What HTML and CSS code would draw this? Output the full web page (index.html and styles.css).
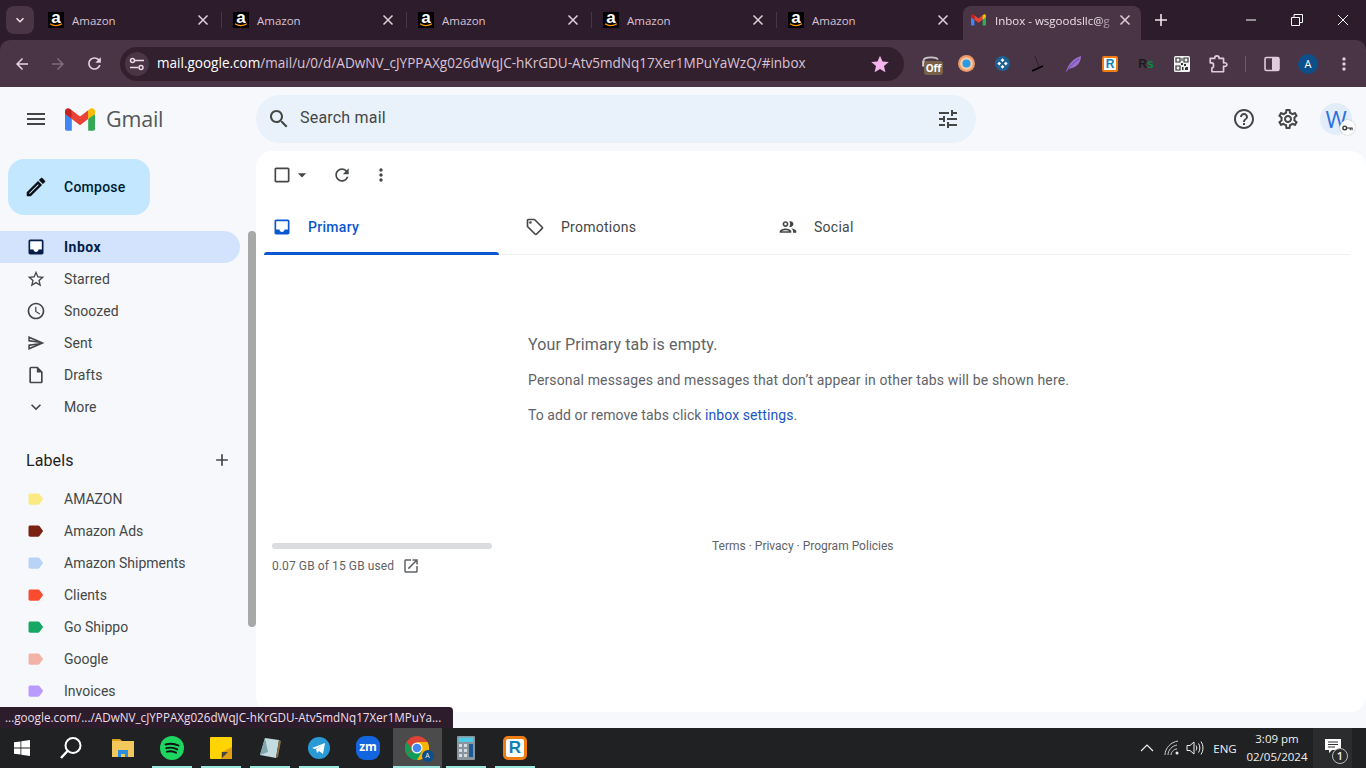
FILE: index.html
```html
<!DOCTYPE html>
<html lang="en">
<head>
    <meta charset="UTF-8">
    <meta name="viewport" content="width=device-width, initial-scale=1.0">
    <title>Inbox - Gmail</title>
    <link rel="stylesheet" href="styles.css">
</head>
<body>

    <svg class="defs" width="0" height="0">
        <symbol id="close" viewBox="0 0 16 16">
            <path d="M3.5 3.5l9 9m0-9l-9 9" fill="none" stroke="currentColor" stroke-width="1.5"/>
        </symbol>
        <symbol id="smile" viewBox="0 0 16 4">
            <path d="M2 .8c3.5 2.200 8 2.200 12 0" fill="none" stroke="#f90" stroke-width="1.300"/>
        </symbol>
        <symbol id="gmail" viewBox="0 0 256 193">
            <path fill="#4285F4" d="M58.182 192.05V93.14L27.507 65.077 0 49.504v125.091c0 9.658 7.825 17.455 17.455 17.455h40.727Z"/>
            <path fill="#34A853" d="M197.818 192.05h40.727c9.659 0 17.455-7.826 17.455-17.455V49.505l-31.156 17.837-27.026 25.798v98.91Z"/>
            <path fill="#EA4335" d="m58.182 93.14-4.174-38.647 4.174-36.989L128 69.868l69.818-52.364 4.669 34.992-4.669 40.644L128 145.504z"/>
            <path fill="#FBBC04" d="M197.818 17.504V93.14L256 49.504V26.231c0-21.585-24.64-33.89-41.89-20.945l-16.292 12.218Z"/>
            <path fill="#C5221F" d="m0 49.504 26.759 20.07L58.182 93.14V17.504L41.89 5.286C24.61-7.66 0 4.646 0 26.23v23.273Z"/>
        </symbol>
        <symbol id="inbox" viewBox="0 0 24 24">
            <path fill="#fff" d="M5 5h14v10h-4c0 1.660-1.350 3-3 3s-3-1.340-3-3H5z"/>
            <path d="M19 3H4.99C3.88 3 3 3.9 3 5l.01 14c0 1.1.88 2 1.99 2h14c1.1 0 2-.9 2-2V5c0-1.1-.9-2-2-2zm0 12h-4c0 1.66-1.35 3-3 3s-3-1.34-3-3H5V5h14v10z"/>
        </symbol>
        <symbol id="label" viewBox="0 0 20 16">
            <path d="M14.6 1.4c-.4-.5-1-.9-1.7-.9L2.2.5C1 .5 0 1.4 0 2.6v10.8c0 1.2 1 2.1 2.2 2.1l10.7 0c.7 0 1.3-.4 1.7-.9L19.5 8z"/>
        </symbol>
    </svg>

    <header class="tabstrip">
        <button class="tab-search">
            <svg viewBox="0 0 16 16" width="14" height="14"><path d="M4 6l4 4 4-4" fill="none" stroke="#f0e4ee" stroke-width="1.7"/></svg>
        </button>
        <div class="tab">
            <span class="favicon amazon-icon">a<svg class="amazon-smile"><use href="#smile"/></svg></span>
            <span class="tab-title">Amazon</span>
            <svg class="tab-close"><use href="#close"/></svg>
        </div>
        <div class="tab">
            <span class="favicon amazon-icon">a<svg class="amazon-smile"><use href="#smile"/></svg></span>
            <span class="tab-title">Amazon</span>
            <svg class="tab-close"><use href="#close"/></svg>
        </div>
        <div class="tab">
            <span class="favicon amazon-icon">a<svg class="amazon-smile"><use href="#smile"/></svg></span>
            <span class="tab-title">Amazon</span>
            <svg class="tab-close"><use href="#close"/></svg>
        </div>
        <div class="tab">
            <span class="favicon amazon-icon">a<svg class="amazon-smile"><use href="#smile"/></svg></span>
            <span class="tab-title">Amazon</span>
            <svg class="tab-close"><use href="#close"/></svg>
        </div>
        <div class="tab tab-last">
            <span class="favicon amazon-icon">a<svg class="amazon-smile"><use href="#smile"/></svg></span>
            <span class="tab-title">Amazon</span>
            <svg class="tab-close"><use href="#close"/></svg>
        </div>
        <div class="tab tab-active">
            <svg class="favicon favicon-gmail"><use href="#gmail"/></svg>
            <span class="tab-title">Inbox - wsgoodsllc@g</span>
            <svg class="tab-close"><use href="#close"/></svg>
        </div>
        <div class="new-tab">
            <svg viewBox="0 0 16 16" width="16" height="16"><path d="M8 2v12M2 8h12" stroke="#f0e4ee" stroke-width="1.6"/></svg>
        </div>
        <div class="window-controls">
            <div class="win-btn"><svg viewBox="0 0 12 12" width="12" height="12"><path d="M1 6h10" stroke="#fff"/></svg></div>
            <div class="win-btn"><svg viewBox="0 0 12 12" width="12" height="12"><path d="M.5 3.5h8v8h-8zM3 3.5V.5h8.500v8H8.500" fill="none" stroke="#fff"/></svg></div>
            <div class="win-btn"><svg viewBox="0 0 12 12" width="12" height="12"><path d="M1 1l10 10M11 1L1 11" stroke="#fff"/></svg></div>
        </div>
    </header>

    <nav class="toolbar">
        <div class="nav-btn">
            <svg viewBox="0 0 24 24" width="18" height="18" fill="#e6d6e3"><path d="M20 11H7.830l5.590-5.590L12 4l-8 8 8 8 1.410-1.410L7.830 13H20v-2z"/></svg>
        </div>
        <div class="nav-btn">
            <svg viewBox="0 0 24 24" width="18" height="18" fill="#7f6c7c"><path d="M4 11h12.170l-5.590-5.590L12 4l8 8-8 8-1.410-1.410L16.170 13H4v-2z"/></svg>
        </div>
        <div class="nav-btn">
            <svg viewBox="0 0 24 24" width="19" height="19" fill="#e6d6e3"><path d="M17.650 6.350C16.200 4.900 14.210 4 12 4c-4.420 0-7.990 3.580-7.990 8s3.570 8 7.990 8c3.730 0 6.840-2.550 7.730-6h-2.080c-.82 2.330-3.040 4-5.650 4-3.310 0-6-2.690-6-6s2.690-6 6-6c1.660 0 3.140.69 4.220 1.780L13 11h7V4l-2.350 2.350z"/></svg>
        </div>
        <div class="omnibox">
            <div class="site-info">
                <svg viewBox="0 0 16 16" width="16" height="16" fill="none" stroke="#eadbe7" stroke-width="1.500"><path d="M6 4.500h9M1 11.500h8"/><circle cx="3.500" cy="4.500" r="2"/><circle cx="12" cy="11.500" r="2"/></svg>
            </div>
            <span class="url"><span class="url-host">mail.google.com</span>/mail/u/0/d/ADwNV_cJYPPAXg026dWqJC-hKrGDU-Atv5mdNq17Xer1MPuYaWzQ/#inbox</span>
            <svg class="url-star" viewBox="0 0 24 24" width="20" height="20" fill="#f6b4ec"><path d="M12 2l3 7 7.500.6-5.700 4.900 1.700 7.400L12 18l-6.500 3.900 1.700-7.400L1.500 9.600 9 9z"/></svg>
        </div>
        <div class="extensions">
            <div class="ext ext-off">
                <svg viewBox="0 0 24 24" width="20" height="20"><path d="M3 8c0-3 4-4 9-4s8 1 8 3" fill="none" stroke="#c9c4c9" stroke-width="2"/><path d="M3 8v7" stroke="#d9d4d9" stroke-width="3"/></svg>
                <span class="off-badge">Off</span>
            </div>
            <div class="ext">
                <svg viewBox="0 0 16 16" width="17" height="17"><circle cx="8" cy="8" r="8" fill="#ec9a66"/><circle cx="8" cy="8" r="6" fill="#f5c9a8"/><circle cx="8" cy="8" r="3.800" fill="#2a9be0"/></svg>
            </div>
            <div class="ext">
                <svg viewBox="0 0 16 16" width="15" height="15"><circle cx="8" cy="8" r="8" fill="#1f6092"/><path d="M8 2.500l2 2-2 2-2-2zM8 9.500l2 2-2 2-2-2zM4.500 6l2 2-2 2-2-2zM11.500 6l2 2-2 2-2-2z" fill="#fff"/></svg>
            </div>
            <div class="ext">
                <svg viewBox="0 0 18 18" width="18" height="18"><path d="M6 1l4 11" stroke="#2a2028"/><path d="M3 16l11-5" stroke="#000" stroke-width="1.600"/></svg>
            </div>
            <div class="ext">
                <svg viewBox="0 0 18 18" width="18" height="18"><path d="M1 17C3 9 9 3 16 1c0 6-4 11-9 12l-3 1z" fill="#9a6fd0"/><path d="M1 17C5 11 9 7 14 4" stroke="#6b4a96" fill="none"/></svg>
            </div>
            <div class="ext">
                <span class="r-logo">R</span>
            </div>
            <div class="ext">
                <span class="rs-logo">R<span class="rs-s">s</span></span>
            </div>
            <div class="ext">
                <svg viewBox="0 0 16 16" width="16" height="16"><rect width="16" height="16" rx="1.500" fill="#f2f2f2"/><path d="M2 2h4v4H2zM10 2h4v4h-4zM2 10h4v4H2z" fill="none" stroke="#333" stroke-width="1.200"/><path d="M7.500 2h1v3h-1zM7 7h2v2H7zM10 8h2v2h-2zM12 11h2v3h-3v-2zM8 11h1.500v3H8z" fill="#333"/></svg>
            </div>
            <div class="ext">
                <svg viewBox="0 0 18 18" width="20" height="20" fill="none" stroke="#e0cbdc" stroke-width="1.500"><path d="M2 4h4c0-3 4-3 4 0h4v4c2-.5 3 .5 3 1.500S16 11.500 14 11v5H3.500v-3.500c2 0 2-4.500 0-4.500H2z" stroke-linejoin="round"/></svg>
            </div>
        </div>
        <div class="toolbar-sep"></div>
        <div class="ext">
            <svg viewBox="0 0 16 16" width="16" height="16"><rect x="1" y="1.500" width="14" height="13" rx="1.500" fill="none" stroke="#e0cbdc" stroke-width="1.600"/><rect x="8" y="1.500" width="7" height="13" fill="#e0cbdc"/></svg>
        </div>
        <div class="ext"><span class="profile">A</span></div>
        <div class="ext">
            <svg viewBox="0 0 24 24" width="20" height="20" fill="#e0cbdc"><path d="M12 8c1.100 0 2-.9 2-2s-.9-2-2-2-2 .9-2 2 .9 2 2 2zm0 2c-1.100 0-2 .9-2 2s.9 2 2 2 2-.9 2-2-.9-2-2-2zm0 6c-1.100 0-2 .9-2 2s.9 2 2 2 2-.9 2-2-.9-2-2-2z"/></svg>
        </div>
    </nav>

    <div class="app">
        <div class="app-header">
            <div class="brand">
                <svg class="icon hamburger" viewBox="0 0 24 24" width="24" height="24"><path d="M3 18h18v-2H3v2zm0-5h18v-2H3v2zm0-7v2h18V6H3z"/></svg>
                <svg class="gmail-logo"><use href="#gmail"/></svg>
                <span class="gmail-word">Gmail</span>
            </div>
            <div class="searchbar">
                <svg class="icon" viewBox="0 0 24 24" width="24" height="24"><path d="M15.500 14h-.79l-.28-.27C15.410 12.590 16 11.110 16 9.500 16 5.910 13.090 3 9.500 3S3 5.910 3 9.500 5.910 16 9.500 16c1.610 0 3.090-.59 4.230-1.570l.27.28v.79l5 4.990L20.490 19l-4.990-5zm-6 0C7.010 14 5 11.990 5 9.500S7.010 5 9.500 5 14 7.010 14 9.500 11.990 14 9.500 14z"/></svg>
                <span class="search-text">Search mail</span>
                <svg class="icon search-tune" viewBox="0 0 24 24" width="24" height="24"><path d="M3 17v2h6v-2H3zM3 5v2h10V5H3zm10 16v-2h8v-2h-8v-2h-2v6h2zM7 9v2H3v2h4v2h2V9H7zm14 4v-2H11v2h10zm-6-4h2V7h4V5h-4V3h-2v6z"/></svg>
            </div>
            <div class="header-actions">
                <svg class="icon" viewBox="0 0 24 24" width="24" height="24"><path d="M11 18h2v-2h-2v2zm1-16C6.480 2 2 6.480 2 12s4.480 10 10 10 10-4.480 10-10S17.520 2 12 2zm0 18c-4.410 0-8-3.590-8-8s3.590-8 8-8 8 3.590 8 8-3.590 8-8 8zm0-14c-2.210 0-4 1.790-4 4h2c0-1.100.9-2 2-2s2 .9 2 2c0 2-3 1.750-3 5h2c0-2.250 3-2.500 3-5 0-2.210-1.790-4-4-4z"/></svg>
                <svg class="icon" viewBox="0 0 24 24" width="24" height="24"><path d="M19.430 12.980c.04-.32.07-.64.07-.98 0-.34-.03-.66-.07-.98l2.110-1.650c.19-.15.24-.42.12-.64l-2-3.460c-.09-.16-.26-.25-.44-.25-.06 0-.12.01-.17.03l-2.490 1c-.52-.4-1.080-.73-1.690-.98l-.38-2.650C14.460 2.180 14.250 2 14 2h-4c-.25 0-.46.18-.49.42l-.38 2.650c-.61.25-1.170.59-1.690.98l-2.490-1c-.06-.02-.12-.03-.18-.03-.17 0-.34.09-.43.25l-2 3.460c-.13.22-.07.49.12.64l2.110 1.650c-.04.32-.07.65-.07.98 0 .33.03.66.07.98l-2.110 1.650c-.19.15-.24.42-.12.64l2 3.460c.09.16.26.25.44.25.06 0 .12-.01.17-.03l2.490-1c.52.4 1.080.73 1.690.98l.38 2.650c.03.24.24.42.49.42h4c.25 0 .46-.18.49-.42l.38-2.650c.61-.25 1.170-.59 1.690-.98l2.490 1c.06.02.12.03.18.03.17 0 .34-.09.43-.25l2-3.460c.12-.22.07-.49-.12-.64l-2.110-1.650zm-1.980-1.710c.04.31.05.52.05.73 0 .21-.02.43-.05.73l-.14 1.130.89.7 1.080.84-.7 1.210-1.270-.51-1.040-.42-.9.68c-.43.32-.84.56-1.250.73l-1.060.43-.16 1.130-.2 1.350h-1.400l-.19-1.350-.16-1.130-1.060-.43c-.43-.18-.83-.41-1.230-.71l-.91-.7-1.060.43-1.270.51-.7-1.210 1.080-.84.89-.7-.14-1.130c-.03-.31-.05-.54-.05-.74s.02-.43.05-.73l.14-1.130-.89-.7-1.080-.84.7-1.210 1.270.51 1.040.42.9-.68c.43-.32.84-.56 1.250-.73l1.060-.43.16-1.130.2-1.350h1.390l.19 1.350.16 1.130 1.060.43c.43.18.83.41 1.230.71l.91.7 1.060-.43 1.270-.51.7 1.210-1.070.85-.89.7.14 1.130zM12 8c-2.210 0-4 1.790-4 4s1.790 4 4 4 4-1.790 4-4-1.790-4-4-4zm0 6c-1.100 0-2-.9-2-2s.9-2 2-2 2 .9 2 2-.9 2-2 2z"/></svg>
                <div class="account">
                    W
                    <span class="key-badge">
                        <svg viewBox="0 0 12 8" width="11" height="8"><circle cx="3" cy="4" r="2" fill="none" stroke="#333" stroke-width="1.500"/><path d="M5 4h6.500M9 4v2.500M11 4v2.500" stroke="#333" stroke-width="1.200"/></svg>
                    </span>
                </div>
            </div>
        </div>

        <div class="app-body">
            <aside class="sidebar">
                <button class="compose">
                    <svg viewBox="0 0 24 24" width="24" height="24" fill="#0a0f14" stroke="#0a0f14" stroke-width=".5"><path d="M14.060 9.020l.92.92L5.920 19H5v-.92l9.060-9.060M17.660 3c-.25 0-.51.1-.7.29l-1.830 1.830 3.750 3.750 1.830-1.830c.39-.39.39-1.020 0-1.410l-2.340-2.340c-.2-.2-.45-.29-.71-.29zm-3.600 3.190L3 17.250V21h3.750L17.810 9.940l-3.750-3.750z"/></svg>
                    <span>Compose</span>
                </button>
                <ul class="nav-list">
                    <li class="nav-item nav-active">
                        <svg class="nav-icon"><use href="#inbox"/></svg>Inbox
                    </li>
                    <li class="nav-item">
                        <svg class="nav-icon" viewBox="0 0 24 24"><path d="M22 9.240l-7.190-.62L12 2 9.190 8.630 2 9.240l5.460 4.730L5.820 21 12 17.270 18.180 21l-1.630-7.030L22 9.240zM12 15.400l-3.760 2.270 1-4.280-3.320-2.880 4.380-.38L12 6.100l1.710 4.040 4.380.38-3.320 2.880 1 4.280L12 15.400z"/></svg>Starred
                    </li>
                    <li class="nav-item">
                        <svg class="nav-icon" viewBox="0 0 24 24"><path d="M11.990 2C6.470 2 2 6.480 2 12s4.470 10 9.990 10C17.520 22 22 17.520 22 12S17.520 2 11.990 2zM12 20c-4.420 0-8-3.580-8-8s3.580-8 8-8 8 3.580 8 8-3.580 8-8 8zm.5-13H11v6l5.250 3.150.75-1.230-4.500-2.670z"/></svg>Snoozed
                    </li>
                    <li class="nav-item">
                        <svg class="nav-icon" viewBox="-1 -1 26 26"><path d="M4.010 6.030l7.510 3.220-7.520-1 .01-2.220m7.500 8.720L4 17.970v-2.220l7.510-1M2.010 3L2 10l15 2-15 2 .01 7L23 12 2.010 3z"/></svg>Sent
                    </li>
                    <li class="nav-item">
                        <svg class="nav-icon" viewBox="0 0 24 24"><path d="M14 2H6c-1.100 0-1.990.9-1.990 2L4 20c0 1.100.89 2 1.990 2H18c1.100 0 2-.9 2-2V8l-6-6zM6 20V4h7v5h5v11H6z"/></svg>Drafts
                    </li>
                    <li class="nav-item">
                        <svg class="nav-icon" viewBox="0 0 24 24"><path d="M16.590 8.590L12 13.170 7.410 8.590 6 10l6 6 6-6z"/></svg>More
                    </li>
                </ul>
                <div class="labels-head">
                    <span>Labels</span>
                    <svg class="icon" viewBox="0 0 24 24" width="20" height="20"><path d="M19 13h-6v6h-2v-6H5v-2h6V5h2v6h6v2z"/></svg>
                </div>
                <ul class="label-list">
                    <li class="label-item"><svg class="label-tag tag-yellow"><use href="#label"/></svg>AMAZON</li>
                    <li class="label-item"><svg class="label-tag tag-brown"><use href="#label"/></svg>Amazon Ads</li>
                    <li class="label-item"><svg class="label-tag tag-blue"><use href="#label"/></svg>Amazon Shipments</li>
                    <li class="label-item"><svg class="label-tag tag-red"><use href="#label"/></svg>Clients</li>
                    <li class="label-item"><svg class="label-tag tag-green"><use href="#label"/></svg>Go Shippo</li>
                    <li class="label-item"><svg class="label-tag tag-salmon"><use href="#label"/></svg>Google</li>
                    <li class="label-item"><svg class="label-tag tag-purple"><use href="#label"/></svg>Invoices</li>
                </ul>
                <div class="side-scroll"></div>
            </aside>

            <main class="card">
                <div class="mail-actions">
                    <svg class="icon" viewBox="0 0 24 24" width="20" height="20"><path d="M19 5v14H5V5h14m0-2H5c-1.100 0-2 .9-2 2v14c0 1.100.9 2 2 2h14c1.100 0 2-.9 2-2V5c0-1.100-.9-2-2-2z"/></svg>
                    <svg class="icon" viewBox="0 0 24 24" width="20" height="20"><path d="M7 10l5 5 5-5z"/></svg>
                    <svg class="icon action-refresh" viewBox="0 0 24 24" width="20" height="20"><path d="M17.650 6.350C16.200 4.900 14.210 4 12 4c-4.420 0-7.990 3.580-7.990 8s3.570 8 7.990 8c3.730 0 6.840-2.550 7.730-6h-2.080c-.82 2.330-3.040 4-5.650 4-3.310 0-6-2.690-6-6s2.690-6 6-6c1.660 0 3.140.69 4.220 1.780L13 11h7V4l-2.350 2.350z"/></svg>
                    <svg class="icon action-more" viewBox="0 0 24 24" width="20" height="20"><path d="M12 8c1.100 0 2-.9 2-2s-.9-2-2-2-2 .9-2 2 .9 2 2 2zm0 2c-1.100 0-2 .9-2 2s.9 2 2 2 2-.9 2-2-.9-2-2-2zm0 6c-1.100 0-2 .9-2 2s.9 2 2 2 2-.9 2-2-.9-2-2-2z"/></svg>
                </div>
                <div class="mail-tabs">
                    <div class="mail-tab mail-tab-active">
                        <svg class="mail-tab-icon"><use href="#inbox"/></svg>Primary
                    </div>
                    <div class="mail-tab">
                        <svg class="mail-tab-icon" viewBox="0 0 24 24"><path d="M21.410 11.580l-9-9C12.050 2.220 11.550 2 11 2H4c-1.100 0-2 .9-2 2v7c0 .55.22 1.050.59 1.420l9 9c.36.36.86.58 1.410.58s1.050-.22 1.410-.59l7-7c.37-.36.59-.86.59-1.410s-.23-1.060-.59-1.420zM13 20.010L4 11V4h7v-.01l9 9-7 7.020z"/><circle cx="6.500" cy="6.500" r="1.500"/></svg>Promotions
                    </div>
                    <div class="mail-tab">
                        <svg class="mail-tab-icon" viewBox="0 0 24 24"><path d="M9 13.750c-2.340 0-7 1.170-7 3.500V19h14v-1.750c0-2.330-4.660-3.500-7-3.500zM4.340 17c.84-.58 2.870-1.250 4.660-1.250s3.820.67 4.660 1.250H4.340zM9 12c1.930 0 3.500-1.570 3.500-3.500S10.930 5 9 5 5.500 6.570 5.500 8.500 7.070 12 9 12zm0-5c.83 0 1.500.67 1.500 1.500S9.830 10 9 10s-1.500-.67-1.500-1.500S8.170 7 9 7zm7.040 6.810c1.160.84 1.960 1.960 1.960 3.440V19h4v-1.750c0-2.020-3.500-3.170-5.960-3.440zM15 12c1.930 0 3.500-1.570 3.500-3.500S16.930 5 15 5c-.54 0-1.040.13-1.500.35.63.89 1 1.980 1 3.150s-.37 2.260-1 3.150c.46.22.96.35 1.500.35z"/></svg>Social
                    </div>
                </div>
                <div class="empty">
                    <h2>Your Primary tab is empty.</h2>
                    <p>Personal messages and messages that don’t appear in other tabs will be shown here.</p>
                    <p class="empty-last">To add or remove tabs click <a href="#">inbox settings</a>.</p>
                </div>
                <div class="mail-footer">
                    <div class="storage">
                        <div class="storage-bar"></div>
                        <div class="storage-text">
                            0.07 GB of 15 GB used
                            <svg class="icon" viewBox="0 0 24 24" width="18" height="18"><path d="M19 19H5V5h7V3H5c-1.110 0-2 .9-2 2v14c0 1.100.89 2 2 2h14c1.100 0 2-.9 2-2v-7h-2v7zM14 3v2h3.590l-9.830 9.830 1.410 1.410L19 6.410V10h2V3h-7z"/></svg>
                        </div>
                    </div>
                    <div class="policies">Terms · Privacy · Program Policies</div>
                </div>
            </main>
        </div>
    </div>

    <div class="status-bubble">...google.com/.../ADwNV_cJYPPAXg026dWqJC-hKrGDU-Atv5mdNq17Xer1MPuYa...</div>

    <footer class="taskbar">
        <div class="task task-start">
            <svg viewBox="0 0 16 16" width="16" height="16" fill="#fff"><path d="M0 2.300l6.500-.9v6.200H0zM7.300 1.300L16 0v7.600H7.300zM0 8.400h6.500v6.200L0 13.700zM7.300 8.400H16V16l-8.700-1.300z"/></svg>
        </div>
        <div class="task task-search">
            <svg viewBox="0 0 24 24" width="24" height="24" fill="none" stroke="#fff" stroke-width="2"><circle cx="14" cy="9.500" r="7.500"/><path d="M8.500 15L2 22" stroke-width="2.400"/></svg>
        </div>
        <div class="task task-explorer">
            <svg viewBox="0 0 22 20" width="22" height="20"><path d="M0 1h8l2 2h-10z" fill="#d9a21b"/><rect y="3" width="22" height="16" fill="#f2c75c"/><path d="M6 19v-7h10v7h-3v-3h-4v3z" fill="#2b8fe0"/></svg>
        </div>
        <div class="task task-on">
            <svg viewBox="0 0 24 24" width="24" height="24"><circle cx="12" cy="12" r="12" fill="#1ed760"/><path d="M5.500 8.500c4.500-1.300 9-1 13 1M6.300 12.200c3.800-1 7.600-.7 11 1.200M7 15.700c3-.8 6.200-.5 9 1" fill="none" stroke="#111" stroke-width="1.900" stroke-linecap="round"/></svg>
        </div>
        <div class="task task-on">
            <svg viewBox="0 0 22 22" width="22" height="22"><rect width="22" height="22" rx="1" fill="#ffd400"/><path d="M11 22V15.500h0L22 10v12z" fill="#e0a010"/><path d="M12 21v-6h6z" fill="#444"/></svg>
        </div>
        <div class="task task-on">
            <svg viewBox="0 0 22 22" width="22" height="22"><path d="M6 1l14 2-3 18L1 18z" fill="#c4dbe0"/><path d="M6 1L1 18l8-3z" fill="#7fa7ad"/><path d="M20 3l-3 18 2-1 3-16z" fill="#8a6d4a"/></svg>
        </div>
        <div class="task task-on">
            <svg viewBox="0 0 22 22" width="22" height="22"><circle cx="11" cy="11" r="11" fill="#2a9ad6"/><path d="M4 11l13-5-2 11-4-3-2 2-1-4 7-4-8 4z" fill="#fff"/></svg>
        </div>
        <div class="task">
            <span class="zoom-logo">zm</span>
        </div>
        <div class="task task-on task-active">
            <svg viewBox="0 0 24 24" width="24" height="24">
                <circle cx="12" cy="12" r="12" fill="#db4437"/>
                <path d="M12 12L1.600 18A12 12 0 0 0 12 24l5-6z" fill="#0f9d58"/>
                <path d="M1.600 18A12 12 0 0 1 1.600 6L7 13z" fill="#0f9d58"/>
                <path d="M12 6h10.400A12 12 0 0 1 12 24l5.200-9z" fill="#f4b400"/>
                <circle cx="12" cy="12" r="5.500" fill="#fff"/>
                <circle cx="12" cy="12" r="4.300" fill="#4285f4"/>
            </svg>
            <span class="chrome-badge">A</span>
        </div>
        <div class="task task-on">
            <svg viewBox="0 0 18 24" width="18" height="24"><rect width="18" height="24" rx="1" fill="#8a949c"/><rect x="1.500" y="1.500" width="15" height="4.500" fill="#50c8e8"/><path d="M2 8h3v3H2zM7 8h3v3H7zM2 13h3v3H2zM7 13h3v3H7zM2 18h3v3H2zM7 18h3v3H7z" fill="#d5dde2"/><rect x="12" y="8" width="4" height="13" fill="#1c5c96"/></svg>
        </div>
        <div class="task task-on">
            <span class="r-logo r-logo-big">R</span>
        </div>
        <div class="tray">
            <div class="tray-chevron">
                <svg viewBox="0 0 14 8" width="14" height="8" fill="none" stroke="#f0f0f0" stroke-width="1.200"><path d="M1 7l6-6 6 6"/></svg>
            </div>
            <div class="tray-wifi">
                <svg viewBox="0 0 16 16" width="16" height="16" fill="none" stroke="#cfcfcf"><path d="M1 15C1 8 7 2 14 1M4 15c0-5 4-9 9-10M7 15c0-3 3-6 6-6"/><circle cx="13" cy="13" r="1.500" fill="#eee" stroke="none"/></svg>
            </div>
            <div class="tray-sound">
                <svg viewBox="0 0 18 16" width="18" height="16" fill="none" stroke="#f0f0f0"><path d="M1 5.500h3L8 2v12l-4-3.500H1z"/><path d="M10 5.500c1 1.500 1 3.500 0 5M12.500 3.500c1.800 2.500 1.800 6.500 0 9M15 1.500c2.600 4 2.600 9 0 13"/></svg>
            </div>
            <div class="tray-lang">ENG</div>
            <div class="tray-clock">
                <span>3:09 pm</span>
                <span>02/05/2024</span>
            </div>
            <div class="tray-notify">
                <svg viewBox="0 0 16 15" width="16" height="15"><path d="M0 0h16v11H7l-3 3v-3H0z" fill="#fff"/><path d="M3 3h10M3 5.500h10M3 8h7" stroke="#333"/></svg>
                <span class="notify-count">1</span>
            </div>
        </div>
    </footer>

</body>
</html>
```

FILE: styles.css
```css
* {
    box-sizing: border-box;
}
html, body {
    margin: 0;
    height: 100%;
}
body {
    position: relative;
    display: flex;
    flex-direction: column;
    width: 1366px;
    height: 768px;
    overflow: hidden;
    font-family: Roboto, Arial, sans-serif;
    background-color: #2c1c2c;
}
ul {
    list-style: none;
    margin: 0;
    padding: 0;
}
.defs {
    position: absolute;
}
.icon {
    flex: none;
    fill: #444746;
}

/* browser tabs */
.tabstrip {
    display: flex;
    flex: none;
    height: 40px;
    font-family: "Open Sans", "Noto Sans", sans-serif;
    font-size: 11.5px;
}
.tab-search {
    display: flex;
    align-items: center;
    justify-content: center;
    width: 28px;
    height: 28px;
    margin: 6px 3px 0 6px;
    padding: 0;
    border: none;
    border-radius: 8px;
    background-color: #4a3546;
}
.tab {
    position: relative;
    display: flex;
    align-items: center;
    flex: none;
    width: 185px;
    padding: 0 11px;
    color: #d9c3d4;
}
.tab::after {
    content: "";
    position: absolute;
    right: 0;
    top: 12px;
    width: 1px;
    height: 16px;
    background-color: #4a3546;
}
.tab-last {
    margin-right: 1px;
}
.tab-last::after {
    display: none;
}
.favicon {
    flex: none;
    width: 16px;
    height: 16px;
    margin-right: 8px;
}
.amazon-icon {
    position: relative;
    background-color: #000;
    color: #fff;
    font-family: "Liberation Sans", sans-serif;
    font-size: 17px;
    font-weight: 700;
    line-height: 12px;
    text-align: center;
}
.amazon-smile {
    position: absolute;
    left: 0;
    bottom: 1px;
    width: 16px;
    height: 4px;
}
.tab-title {
    flex: 1;
    white-space: nowrap;
}
.tab-close {
    flex: none;
    width: 16px;
    height: 16px;
    color: #e0cfdc;
}
.tab-active {
    width: 178px;
    height: 34px;
    margin-top: 6px;
    padding: 0 8px 6px;
    border-radius: 8px 8px 0 0;
    background-color: #4a3546;
    color: #ecdfe9;
}
.tab-active::after {
    display: none;
}
.tab-active .tab-title {
    -webkit-mask-image: linear-gradient(to right, #000 85%, transparent);
    mask-image: linear-gradient(to right, #000 85%, transparent);
}
.favicon-gmail {
    width: 15px;
    margin-right: 9px;
}
.new-tab {
    display: flex;
    align-items: center;
    justify-content: center;
    width: 28px;
    margin-left: 6px;
}
.window-controls {
    display: flex;
    margin-left: auto;
}
.win-btn {
    display: flex;
    align-items: center;
    justify-content: center;
    width: 46px;
}

/* address bar row */
.toolbar {
    display: flex;
    align-items: center;
    flex: none;
    height: 47px;
    padding-left: 4px;
    border-radius: 10px 10px 0 0;
    background-color: #4a3546;
    font-family: "Open Sans", "Noto Sans", sans-serif;
}
.nav-btn {
    display: flex;
    align-items: center;
    justify-content: center;
    width: 36px;
}
.omnibox {
    display: flex;
    align-items: center;
    width: 784px;
    height: 34px;
    margin: 0 10px 0 8px;
    padding: 0 14px 0 5px;
    border-radius: 17px;
    background-color: #33202f;
    color: #d9c3d4;
    font-size: 13.55px;
}
.site-info {
    display: flex;
    align-items: center;
    justify-content: center;
    width: 24px;
    height: 24px;
    margin-right: 8px;
    border-radius: 50%;
    background-color: #4a3546;
}
.url {
    padding-bottom: 1px;
    white-space: nowrap;
}
.url-host {
    color: #fff;
}
.url-star {
    margin-left: auto;
}
.extensions {
    display: flex;
}
.ext {
    position: relative;
    display: flex;
    align-items: center;
    justify-content: center;
    flex: none;
    width: 36px;
    height: 36px;
}
.ext-off {
    margin-right: -2px;
    justify-content: flex-start;
    padding-left: 7px;
}
.off-badge {
    position: absolute;
    left: 10px;
    top: 15px;
    width: 19px;
    height: 14px;
    border-radius: 3px;
    background-color: #7a6248;
    color: #fff;
    font-size: 10px;
    font-weight: 700;
    line-height: 14px;
    text-align: center;
}
.r-logo {
    display: block;
    width: 16px;
    height: 16px;
    border: 2px solid #f07c16;
    border-radius: 2px;
    background-color: #fff;
    color: #0f7fb8;
    font-family: "Liberation Sans", sans-serif;
    font-size: 12px;
    font-weight: 700;
    line-height: 12px;
    text-align: center;
}
.r-logo-big {
    width: 24px;
    height: 24px;
    border-width: 3px;
    border-radius: 5px;
    font-size: 17px;
    line-height: 18px;
}
.rs-logo {
    color: #1d1a1d;
    font-family: "Liberation Sans", sans-serif;
    font-size: 12px;
    font-weight: 700;
}
.rs-s {
    color: #0a8a3c;
}
.toolbar-sep {
    width: 1px;
    height: 16px;
    margin: 0 8px 0 9px;
    background-color: #6d5869;
}
.profile {
    width: 20px;
    height: 20px;
    border-radius: 50%;
    background-color: #0d4f8b;
    color: #fff;
    font-size: 11px;
    line-height: 20px;
    text-align: center;
}

/* gmail */
.app {
    display: flex;
    flex-direction: column;
    flex: none;
    height: 641px;
    background-color: #f6f8fc;
    color: #444746;
}
.app-header {
    display: flex;
    align-items: center;
    flex: none;
    height: 64px;
}
.brand {
    display: flex;
    align-items: center;
    flex: none;
    width: 256px;
    padding-left: 24px;
}
.gmail-logo {
    width: 30px;
    height: 23px;
    margin-left: 17px;
}
.gmail-word {
    margin-left: 11px;
    padding-bottom: 1px;
    color: #54575a;
    font-family: "Open Sans", sans-serif;
    font-size: 21.500px;
    letter-spacing: -.2px;
}
.searchbar {
    display: flex;
    align-items: center;
    flex: none;
    width: 720px;
    height: 48px;
    padding: 0 16px 0 11px;
    border-radius: 24px;
    background-color: #e9f1fb;
}
.search-text {
    margin-left: 9px;
    padding-bottom: 3px;
    font-size: 16px;
    letter-spacing: .2px;
}
.search-tune {
    margin-left: auto;
}
.header-actions {
    display: flex;
    align-items: center;
    gap: 20px;
    margin-left: auto;
    padding-right: 14px;
}
.account {
    position: relative;
    width: 32px;
    height: 32px;
    border-radius: 50%;
    background-color: #e3edfa;
    color: #2c6fe0;
    font-family: "Open Sans", sans-serif;
    font-size: 23px;
    line-height: 32px;
    text-align: center;
}
.key-badge {
    position: absolute;
    right: -3px;
    bottom: 0;
    display: flex;
    align-items: center;
    justify-content: center;
    width: 15px;
    height: 15px;
    border-radius: 50%;
    background-color: #fff;
    box-shadow: 0 0 2px rgba(0, 0, 0, .25);
}
.app-body {
    display: flex;
    flex: none;
    height: 577px;
}

/* left column */
.sidebar {
    position: relative;
    flex: none;
    width: 256px;
    overflow: hidden;
    padding-top: 8px;
    font-size: 14px;
    letter-spacing: .1px;
}
.compose {
    display: flex;
    align-items: center;
    width: 142px;
    height: 56px;
    margin-left: 8px;
    padding: 0 0 0 16px;
    border: none;
    border-radius: 16px;
    background-color: #c2e7ff;
    color: #001d35;
    font-family: Roboto, sans-serif;
    font-size: 14px;
    font-weight: 500;
    letter-spacing: .25px;
}
.compose span {
    margin-left: 16px;
}
.nav-list {
    margin-top: 16px;
}
.nav-item {
    display: flex;
    align-items: center;
    width: 240px;
    height: 32px;
    padding-left: 26px;
}
.nav-icon {
    flex: none;
    width: 20px;
    height: 20px;
    margin-right: 18px;
    fill: #444746;
}
.nav-active {
    border-radius: 0 16px 16px 0;
    background-color: #d3e3fd;
    color: #041e49;
    font-weight: 700;
    letter-spacing: .5px;
}
.nav-active .nav-icon {
    fill: #041e49;
}
.labels-head {
    display: flex;
    align-items: center;
    justify-content: space-between;
    width: 232px;
    height: 32px;
    margin-top: 21px;
    padding-left: 26px;
    color: #1f1f1f;
    font-size: 16px;
}
.label-list {
    margin-top: 7px;
}
.label-item {
    display: flex;
    align-items: center;
    height: 32px;
    padding-left: 28px;
    letter-spacing: 0;
}
.label-tag {
    flex: none;
    width: 16px;
    height: 12px;
    margin-right: 20px;
}
.tag-yellow { fill: #fbe983; }
.tag-brown { fill: #7a2314; }
.tag-blue { fill: #b9d2f8; }
.tag-red { fill: #fb4c2f; }
.tag-green { fill: #16a765; }
.tag-salmon { fill: #f2b2a8; }
.tag-purple { fill: #b99aff; }
.side-scroll {
    position: absolute;
    right: 0;
    top: 80px;
    width: 8px;
    height: 396px;
    border-radius: 4px;
    background-color: #a8a8a8;
}

/* message area */
.card {
    display: flex;
    flex-direction: column;
    flex: 1;
    height: 561px;
    border-radius: 16px;
    background-color: #fff;
}
.mail-actions {
    display: flex;
    align-items: center;
    flex: none;
    height: 48px;
    padding-left: 16px;
}
.action-refresh {
    margin-left: 20px;
}
.action-more {
    margin-left: 19px;
}
.mail-tabs {
    display: flex;
    flex: none;
    height: 56px;
    margin: 0 16px 0 8px;
    border-bottom: 1px solid #f0f0f0;
    font-size: 14px;
    letter-spacing: .25px;
}
.mail-tab {
    position: relative;
    display: flex;
    align-items: center;
    flex: none;
    width: 235px;
    margin-right: 18px;
    padding-left: 8px;
}
.mail-tab-icon {
    flex: none;
    width: 20px;
    height: 20px;
    margin-right: 16px;
    fill: #444746;
}
.mail-tab-active {
    color: #0b57d0;
    font-weight: 500;
    letter-spacing: .3px;
}
.mail-tab-active .mail-tab-icon {
    fill: #0b57d0;
}
.mail-tab-active::after {
    content: "";
    position: absolute;
    left: 0;
    right: 0;
    bottom: -1px;
    height: 3px;
    border-radius: 3px 3px 0 0;
    background-color: #0b57d0;
}
.empty {
    flex: none;
    padding: 80px 0 0 272px;
    color: #5f6368;
}
.empty h2 {
    margin: 0;
    font-size: 16px;
    font-weight: 400;
    line-height: 20px;
    letter-spacing: .12px;
}
.empty p {
    margin: 15px 0 0;
    font-size: 14px;
    line-height: 20px;
    letter-spacing: .15px;
}
.empty .empty-last {
    margin-top: 15px;
    letter-spacing: .08px;
}
.empty a {
    color: #1a56c4;
    text-decoration: none;
}
.mail-footer {
    display: flex;
    flex: none;
    margin-top: 113px;
    padding-left: 16px;
    color: #5f6368;
    font-size: 12px;
}
.storage {
    flex: none;
    width: 220px;
    padding-top: 5px;
}
.storage-bar {
    height: 6px;
    border-radius: 3px;
    background-color: #dadce0;
}
.storage-text {
    display: flex;
    align-items: center;
    gap: 8px;
    height: 18px;
    margin-top: 8px;
    letter-spacing: .1px;
}
.storage-text .icon {
    fill: #5f6368;
}
.policies {
    margin: 0 0 0 220px;
    padding-top: 1px;
}

/* link preview */
.status-bubble {
    position: absolute;
    left: 0;
    bottom: 40px;
    width: 453px;
    height: 21px;
    padding-left: 5px;
    border-radius: 0 4px 0 0;
    background-color: #2c1c2c;
    color: #ecdfe9;
    font-family: "Open Sans", "Noto Sans", sans-serif;
    font-size: 11.7px;
    line-height: 21px;
    white-space: nowrap;
}

/* windows taskbar */
.taskbar {
    display: flex;
    flex: none;
    height: 40px;
    background-color: #202122;
    color: #f0f0f0;
    font-family: "Open Sans", "Noto Sans", sans-serif;
    font-size: 11.5px;
}
.task {
    position: relative;
    display: flex;
    align-items: center;
    justify-content: center;
    flex: none;
    width: 49px;
}
.task-start {
    width: 44px;
}
.task-search {
    width: 54px;
}
.task-explorer {
    width: 49.500px;
}
.task-on::after {
    content: "";
    position: absolute;
    left: 4.500px;
    right: 4.500px;
    bottom: 0;
    height: 2px;
    background-color: #9de8de;
}
.task-active {
    background-color: #4b4b4b;
}
.task-active::after {
    left: 0;
    right: 2px;
}
.zoom-logo {
    width: 24px;
    height: 24px;
    border-radius: 9px;
    background-color: #1366e0;
    color: #fff;
    font-size: 12px;
    font-weight: 700;
    line-height: 22px;
    text-align: center;
}
.chrome-badge {
    position: absolute;
    left: 29px;
    top: 22px;
    width: 12px;
    height: 12px;
    border-radius: 50%;
    background-color: #0d4f8b;
    font-size: 7px;
    line-height: 12px;
    text-align: center;
}
.tray {
    display: flex;
    align-items: center;
    margin-left: auto;
    padding-right: 14px;
}
.tray-chevron {
    display: flex;
    justify-content: center;
    width: 24px;
}
.tray-wifi {
    display: flex;
    justify-content: center;
    width: 25px;
}
.tray-sound {
    display: flex;
    justify-content: center;
    width: 22px;
}
.tray-lang {
    width: 38px;
    text-align: center;
}
.tray-clock {
    display: flex;
    flex-direction: column;
    align-items: center;
    width: 66px;
    margin-right: 3px;
    line-height: 18px;
}
.tray-notify {
    position: relative;
    display: flex;
    align-items: center;
    justify-content: center;
    width: 39px;
    height: 40px;
    padding-bottom: 4px;
    background-color: #2b2c2d;
}
.notify-count {
    position: absolute;
    left: 19px;
    top: 20px;
    width: 16px;
    height: 16px;
    border: 1px solid #bdbdbd;
    border-radius: 50%;
    background-color: #2b2c2d;
    font-size: 11px;
    font-weight: 600;
    line-height: 14px;
    text-align: center;
}
```
